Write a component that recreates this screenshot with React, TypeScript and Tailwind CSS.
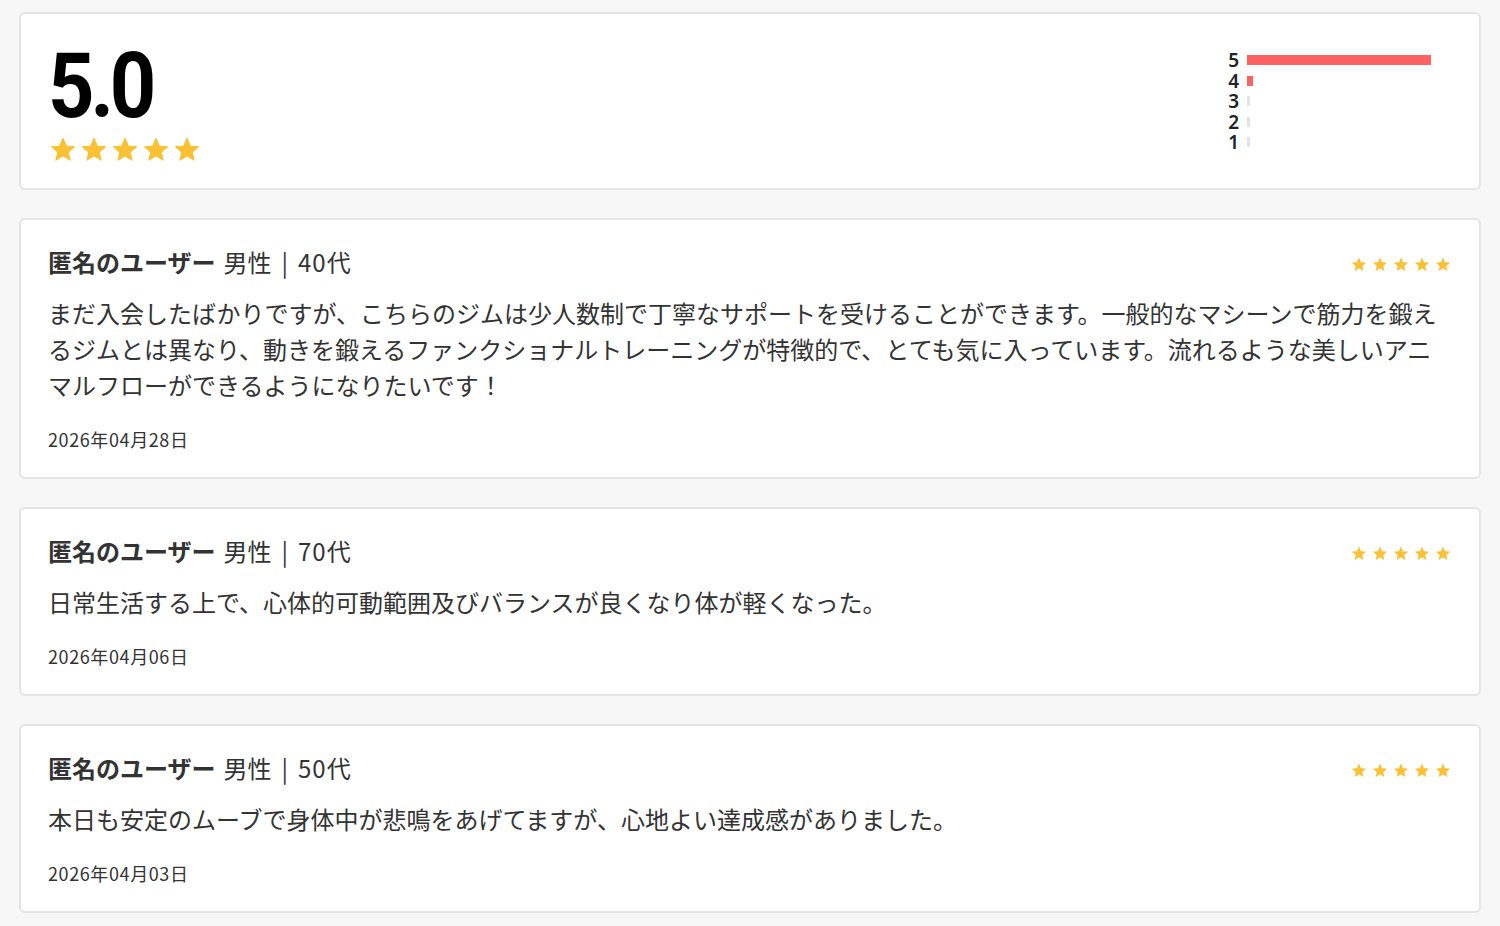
import React from "react";

type Review = {
  name: string;
  gender: string;
  age: string;
  body: string;
  date: string;
  rating: number;
};

const reviews: Review[] = [
  {
    name: "匿名のユーザー",
    gender: "男性",
    age: "40代",
    body: "まだ入会したばかりですが、こちらのジムは少人数制で丁寧なサポートを受けることができます。一般的なマシーンで筋力を鍛えるジムとは異なり、動きを鍛えるファンクショナルトレーニングが特徴的で、とても気に入っています。流れるような美しいアニマルフローができるようになりたいです！",
    date: "2026年04月28日",
    rating: 5,
  },
  {
    name: "匿名のユーザー",
    gender: "男性",
    age: "70代",
    body: "日常生活する上で、心体的可動範囲及びバランスが良くなり体が軽くなった。",
    date: "2026年04月06日",
    rating: 5,
  },
  {
    name: "匿名のユーザー",
    gender: "男性",
    age: "50代",
    body: "本日も安定のムーブで身体中が悲鳴をあげてますが、心地よい達成感がありました。",
    date: "2026年04月03日",
    rating: 5,
  },
];

// share of each score, 5 → 1
const distribution = [
  { score: 5, pct: 100, color: "bg-[#fe6163]" },
  { score: 4, pct: 3, color: "bg-[#fe6163]" },
  { score: 3, pct: 0, color: "bg-[#e4e4e4]" },
  { score: 2, pct: 0, color: "bg-[#e4e4e4]" },
  { score: 1, pct: 0, color: "bg-[#e4e4e4]" },
];

const FONT = "font-['Noto_Sans_CJK_JP','Noto_Sans',sans-serif]";

const Star = ({ className }: { className: string }) => (
  <svg viewBox="1.6 1.6 20.8 20.2" className={className} fill="#f9c133">
    <path
      d="M12 17.27L18.18 21l-1.64-7.03L22 9.24l-7.19-.61L12 2 9.19 8.63 2 9.24l5.46 4.73L5.82 21z"
      stroke="#f9c133"
      strokeWidth="1"
      strokeLinejoin="round"
    />
  </svg>
);

const Summary = () => (
  <div className="flex h-[178px] items-center justify-between rounded-[6px] border-2 border-[#e4e4e4] bg-white pl-[27px] pr-[48px]">
    <div className="flex flex-col">
      <div className="origin-left scale-x-[0.9] font-['Roboto',sans-serif] text-[90px] font-bold leading-[90px] tracking-[-0.05em] text-black">
        5.0
      </div>
      <div className="mt-[6px] flex gap-[7px] pl-[3px]">
        {[0, 1, 2, 3, 4].map((i) => (
          <Star key={i} className="h-[23px] w-[24px]" />
        ))}
      </div>
    </div>
    <div className="flex flex-col">
      {distribution.map((d) => (
        <div key={d.score} className="flex h-[20.5px] items-center gap-[8px]">
          <span className="w-[12px] text-right font-['Noto_Sans',sans-serif] text-[19px] font-semibold leading-[20px] text-[#222]">
            {d.score}
          </span>
          <div className="w-[184px]">
            <div
              className={`h-[10px] min-w-[3px] ${d.color}`}
              style={{ width: `${d.pct}%` }}
            />
          </div>
        </div>
      ))}
    </div>
  </div>
);

const ReviewCard = ({ review }: { review: Review }) => (
  <div className={`rounded-[6px] border-2 border-[#e4e4e4] bg-white px-[27px] pt-[24px] pb-[26px] text-[#333] ${FONT}`}>
    <div className="flex items-center justify-between">
      <div className="flex items-baseline text-[24px] leading-[36px]">
        <span className="font-bold">{review.name}</span>
        <span className="ml-[8px]">{review.gender}</span>
        <span className="mx-[10px]">|</span>
        <span className="tracking-[1px]">{review.age}</span>
      </div>
      <div className="mt-[4px] flex gap-[7px] pr-[2px]">
        {Array.from({ length: review.rating }).map((_, i) => (
          <Star key={i} className="h-[13px] w-[14px]" />
        ))}
      </div>
    </div>
    <p className="mt-[15px] text-[24px] leading-[36px]">{review.body}</p>
    <div className="mt-[24px] text-[18px] leading-[24px] tracking-[0.6px]">{review.date}</div>
  </div>
);

export default function App() {
  return (
    <div className="min-h-[926px] bg-[#f7f7f7] px-[19px] pt-[12px] pb-[14px]">
      <div className="flex flex-col gap-[28px]">
        <Summary />
        {reviews.map((r, i) => (
          <ReviewCard key={i} review={r} />
        ))}
      </div>
    </div>
  );
}
